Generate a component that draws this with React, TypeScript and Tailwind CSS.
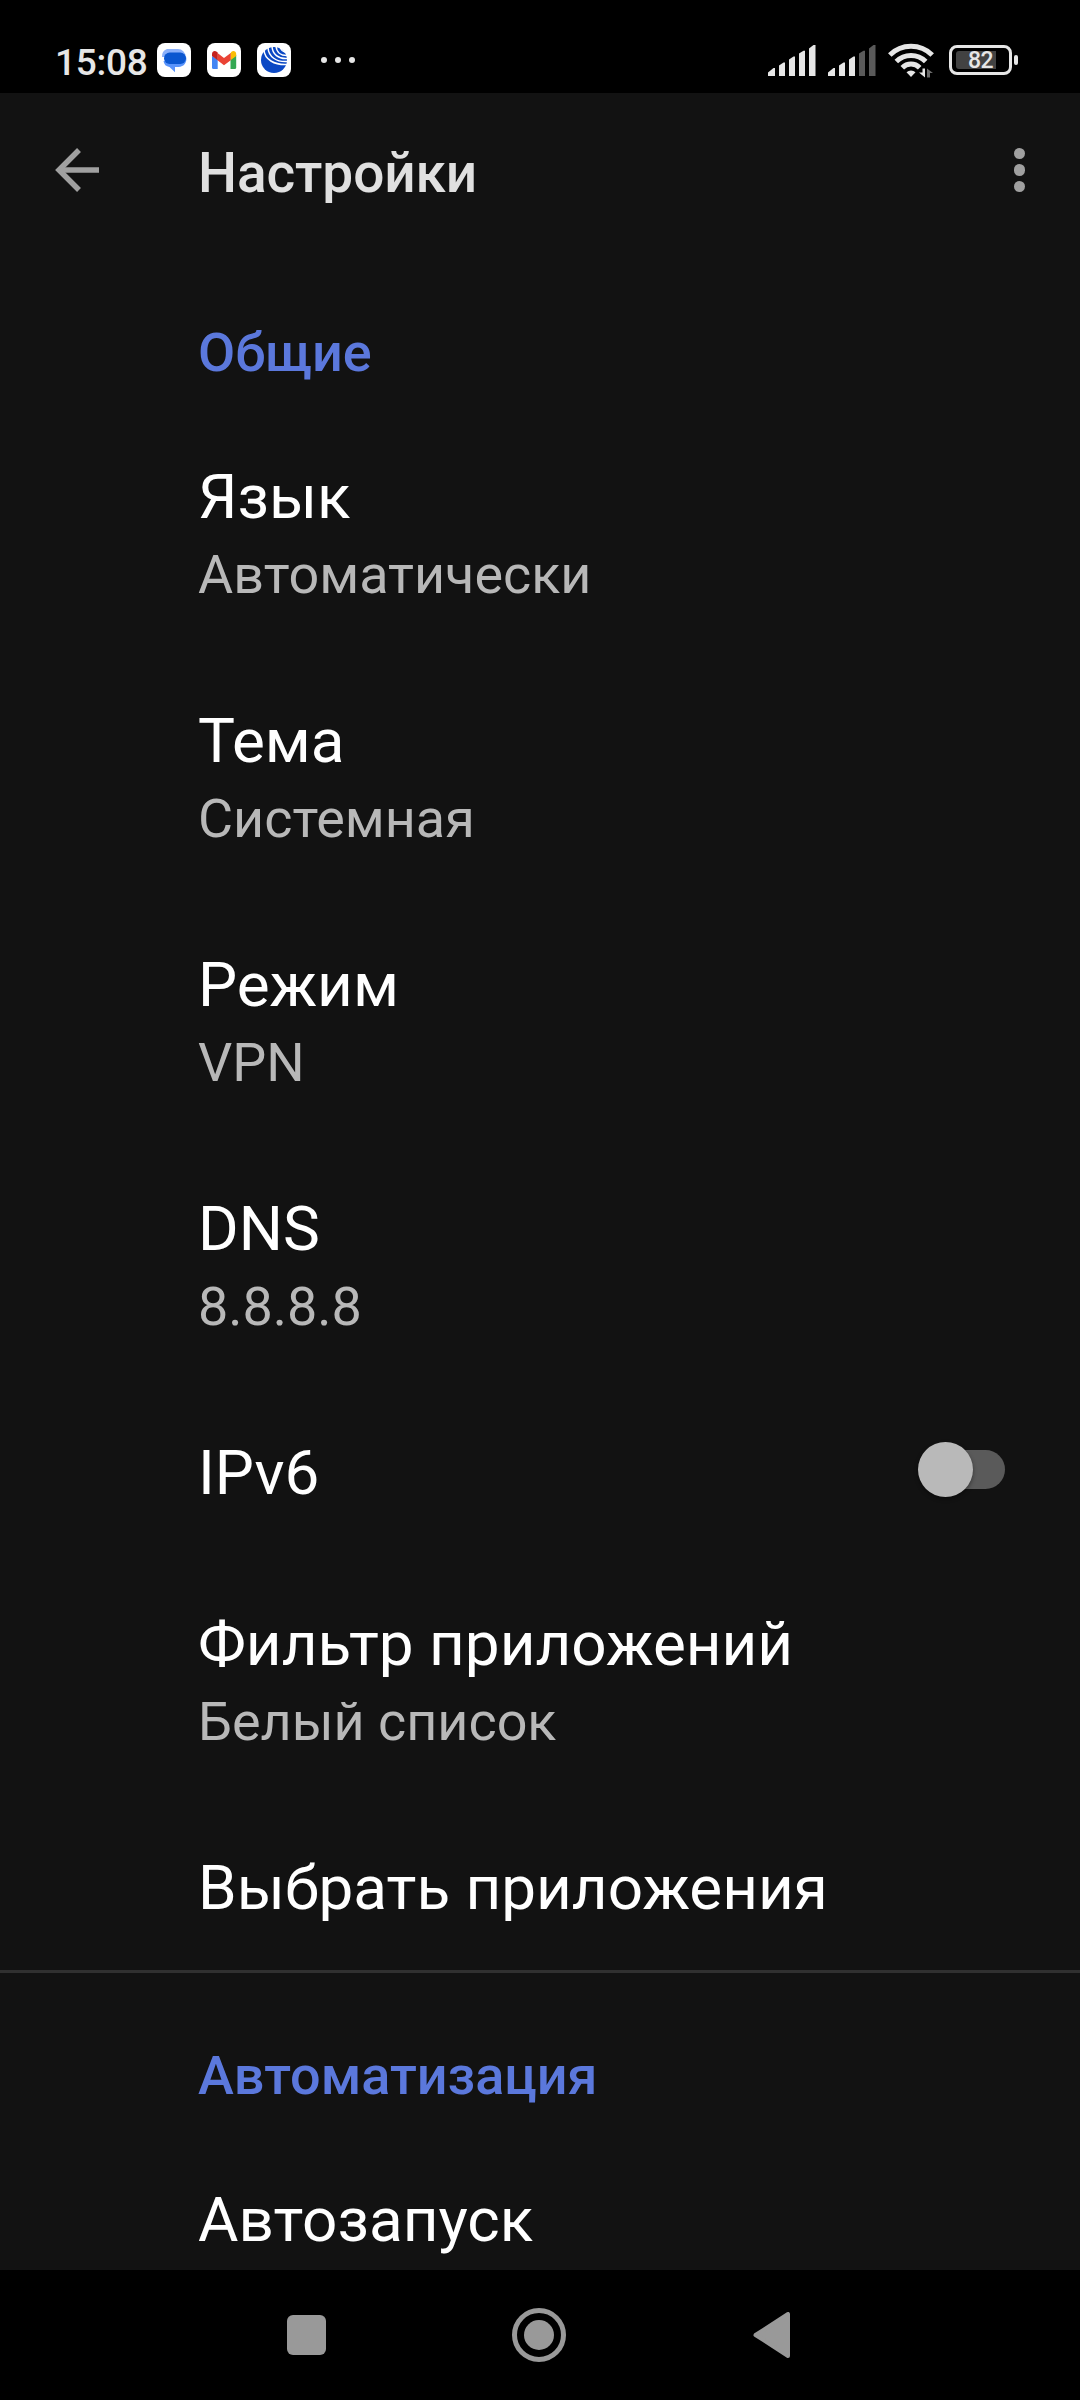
import React from "react";

interface SettingItem {
  title: string;
  summary?: string;
  toggle?: boolean;
}

const generalItems: SettingItem[] = [
  { title: "Язык", summary: "Автоматически" },
  { title: "Тема", summary: "Системная" },
  { title: "Режим", summary: "VPN" },
  { title: "DNS", summary: "8.8.8.8" },
  { title: "IPv6", toggle: true },
  { title: "Фильтр приложений", summary: "Белый список" },
  { title: "Выбрать приложения" },
];

const MessagesIcon = () => (
  <svg width="34" height="34" viewBox="0 0 34 34">
    <rect width="34" height="34" rx="8" fill="#fff" />
    <path d="M10 6H21a7.500 7.500 0 0 1 7.500 7.500V14H5A8 8 0 0 1 10 6Z" fill="#8ab0fa" />
    <path d="M29 13.500A8 8 0 0 1 21.500 24H18v5.200L12.500 24A7 7 0 0 1 6.500 18Z" fill="#5a94fb" />
    <rect x="7" y="9.500" width="22" height="11.500" rx="5.700" fill="#0b57d0" />
  </svg>
);

const GmailIcon = () => (
  <svg width="34" height="34" viewBox="0 0 34 34">
    <rect width="34" height="34" rx="8" fill="#fff" />
    <path d="M5 13v11.500a1.500 1.500 0 0 0 1.500 1.500H10.700V16.500Z" fill="#4285f4" />
    <path d="M23.500 16.500V26h4.200a1.500 1.500 0 0 0 1.500-1.500V12Z" fill="#34a853" />
    <path d="M23.500 10.300v7L29.200 13v-2c0-3-3-3.600-4.700-2.300Z" fill="#fbbc04" />
    <path d="M10.500 17.300V10L17 15l6.700-5v7.300L17 22.200Z" fill="#ea4335" />
    <path d="M5 13v-2c0-3 3-3.600 4.700-2.300l1 .8v7.800Z" fill="#c5221f" />
  </svg>
);

const GlobeIcon = () => (
  <svg width="34" height="34" viewBox="0 0 34 34">
    <rect width="34" height="34" rx="8" fill="#fff" />
    <circle cx="17" cy="17" r="13" fill="#0b48c4" />
    <g fill="none" stroke="#fff" strokeWidth="1.500">
      <path d="M7 7C7.500 16 17 22.500 31 21.500" />
      <path d="M11 4.500C11.500 13.500 19 19.500 31 18.500" />
      <path d="M15 3.500C15.500 11 21 16.500 31 15.500" />
      <path d="M19 3C19.500 9 23.500 13 31 12.500" />
      <path d="M23 3C23.500 6.500 26 9.500 31 9.500" />
    </g>
  </svg>
);

const bars = [
  "M0 31v-3.500L5.500 23H7v8Z",
  "M11 31V20.500L15.500 17.500H17V31Z",
  "M21 31V14.500L25.500 11.500H27V31Z",
  "M31 31V8.500L35.500 5.700H37V31Z",
  "M41 31V3.500L45.500 0H47.500V31Z",
];

const SignalIcon = ({ level }: { level: number }) => (
  <svg width="48" height="31" viewBox="0 0 48 31">
    {bars.map((d, i) => (
      <path key={d} d={d} fill={i < level ? "#e6e6e6" : "#5a5a5a"} />
    ))}
  </svg>
);

const WifiIcon = () => (
  <svg width="46" height="35" viewBox="0 0 46 35">
    <g fill="none" stroke="#e6e6e6" strokeWidth="5">
      <path d="M1.800 12A30 30 0 0 1 44.200 12" />
      <path d="M8.300 18.500A20.800 20.800 0 0 1 37.700 18.500" />
      <path d="M14.300 24.700A12.300 12.300 0 0 1 31.700 24.700" />
    </g>
    <path d="M23 34l-4.500-4.700a6.400 6.400 0 0 1 9 0Z" fill="#e6e6e6" />
    <path d="M34.500 25.500h2.500V34.500L31 29.500h3.500Z" fill="#e6e6e6" />
    <path d="M39 34.500V25.500l6 4.500h-3v4.500Z" fill="#6b6b6b" />
  </svg>
);

const BatteryIcon = () => (
  <div className="flex items-center">
    <div className="flex h-[30px] w-[63px] items-center rounded-[8px] border-[3px] border-[#e6e6e6] pl-[4px]">
      <div className="flex h-[18px] w-[40px] items-center justify-center rounded-l-[3px] bg-[#424242] text-[23px] leading-[22px] font-medium tracking-[-0.5px] text-[#e6e6e6]">
        <span className="mt-[2px] ml-[9px]">82</span>
      </div>
    </div>
    <div className="ml-[2px] h-[10px] w-[4px] rounded-[2px] bg-[#e6e6e6]" />
  </div>
);

const StatusBar = () => (
  <div className="flex h-[93px] shrink-0 items-start bg-black pl-[55px]">
    <span className="mt-[38px] w-[102px] text-[37px] leading-[50px] font-medium tracking-[-0.3px] text-[#e6e6e6]">
      15:08
    </span>
    <div className="mt-[43px] flex gap-[16px]">
      <MessagesIcon />
      <GmailIcon />
      <GlobeIcon />
    </div>
    <div className="mt-[57px] ml-[30px] flex gap-[8px]">
      <div className="size-[6px] rounded-full bg-[#e6e6e6]" />
      <div className="size-[6px] rounded-full bg-[#e6e6e6]" />
      <div className="size-[6px] rounded-full bg-[#e6e6e6]" />
    </div>
    <div className="mt-[43px] mr-[62px] ml-auto flex items-start">
      <div className="mt-[2px] mr-[12px]">
        <SignalIcon level={5} />
      </div>
      <div className="mt-[2px] mr-[12px]">
        <SignalIcon level={3} />
      </div>
      <div className="mr-[15px]">
        <WifiIcon />
      </div>
      <div className="mt-[2px]">
        <BatteryIcon />
      </div>
    </div>
  </div>
);

const Toolbar = () => (
  <header className="flex h-[154px] shrink-0 items-center pr-[55px] pl-[55px]">
    <button type="button" title="Назад">
      <svg width="45" height="44" viewBox="0 0 45 44" fill="none" stroke="#a0a0a0" strokeWidth="5.500">
        <path d="M44 22H4" />
        <path d="M24 2L4 22l20 20" />
      </svg>
    </button>
    <h1 className="mt-[6px] ml-[98px] text-[55px] leading-[64px] font-medium tracking-[-0.1px] text-[#e0e0e0]">
      Настройки
    </h1>
    <button type="button" title="Меню" className="ml-auto flex flex-col gap-[5px]">
      <div className="size-[11.5px] rounded-full bg-[#a0a0a0]" />
      <div className="size-[11.5px] rounded-full bg-[#a0a0a0]" />
      <div className="size-[11.5px] rounded-full bg-[#a0a0a0]" />
    </button>
  </header>
);

const Toggle = () => (
  <div className="mb-[7px] flex items-center">
    <div className="z-10 size-[55px] rounded-full bg-[#b9b9b9] shadow-[0_2px_4px_rgba(0,0,0,0.4)]" />
    <div className="-ml-[40px] h-[39px] w-[72px] rounded-full bg-[#5a5a5a]" />
  </div>
);

const SettingRow = ({ title, summary, toggle }: SettingItem) => (
  <div className={`flex items-center justify-between pt-[44px] pr-[75px] pl-[198px] ${summary ? "pb-[44px]" : "pb-[43px]"}`}>
    <div>
      <div className="text-[62px] leading-[84px] text-white">{title}</div>
      {summary && <div className="text-[53.9px] leading-[72px] text-[#b8b8b8]">{summary}</div>}
    </div>
    {toggle && <Toggle />}
  </div>
);

const SectionTitle = ({ children }: { children: React.ReactNode }) => (
  <h2 className="pl-[198px] text-[54px] leading-[72px] font-medium text-[#5b78dc]">{children}</h2>
);

const NavBar = () => (
  <nav className="flex h-[130px] shrink-0 items-center bg-black pl-[287px]">
    <div className="h-[40px] w-[39px] rounded-[6px] bg-[#999999]" />
    <div className="ml-[186px] flex size-[54px] items-center justify-center rounded-full border-[5px] border-[#999999]">
      <div className="size-[30px] rounded-full bg-[#999999]" />
    </div>
    <svg className="ml-[187px]" width="37" height="46" viewBox="0 0 37 46">
      <path d="M2.500 23L35 2v42Z" fill="#999999" stroke="#999999" strokeWidth="4" strokeLinejoin="round" />
    </svg>
  </nav>
);

const App: React.FC = () => {
  return (
    <div className="flex h-[2400px] w-[1080px] flex-col overflow-hidden bg-[#121212] font-['Roboto',sans-serif]">
      <StatusBar />
      <Toolbar />
      <main className="min-h-0 flex-1 overflow-hidden">
        <div className="pt-[70px] pb-[22px]">
          <SectionTitle>Общие</SectionTitle>
        </div>
        {generalItems.map((item) => (
          <SettingRow key={item.title} {...item} />
        ))}

        <div className="-mt-[3px] h-[3px] bg-[#303030]" />
        <div className="pt-[67px] pb-[22px]">
          <SectionTitle>Автоматизация</SectionTitle>
        </div>
        <SettingRow title="Автозапуск" />
      </main>
      <NavBar />
    </div>
  );
};

export default App;
